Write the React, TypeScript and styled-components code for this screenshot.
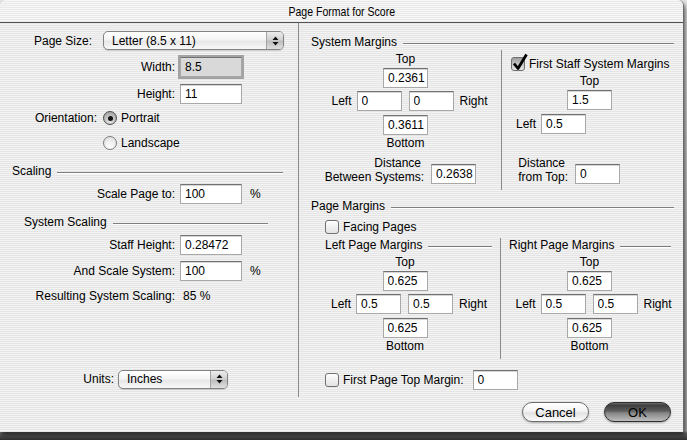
import styled, { createGlobalStyle } from "styled-components";

const GlobalStyle = createGlobalStyle`
  html, body {
    margin: 0;
    padding: 0;
  }
  body {
    width: 687px;
    height: 440px;
    overflow: hidden;
    background: linear-gradient(to bottom, #e6e6e6 0px, #b0b0b0 431px, #6a6a6a 433px, #2e2e2e 440px);
    font-family: "Liberation Sans", Arial, sans-serif;
  }
`;

const pinstripe =
    "repeating-linear-gradient(to bottom, #f3f3f3 0px, #f3f3f3 1px, #e5e5e5 1px, #e5e5e5 2px)";

const Window = styled.div`
    width: 684px;
    height: 432px;
    display: flex;
    flex-direction: column;
    background: ${pinstripe};
    border-radius: 6px 6px 0 0;
    border-right: 1px solid #6a6a6a;
    box-sizing: border-box;
    box-shadow: 1px 3px 5px rgba(0, 0, 0, 0.7);
    overflow: hidden;
    color: #000;
    font-size: 12px;
`;

const TitleBar = styled.div`
    flex: none;
    height: 22px;
    display: flex;
    align-items: center;
    justify-content: center;
    border-bottom: 1px solid #555;
    background: repeating-linear-gradient(to bottom, #f7f7f7 0px, #f7f7f7 1px, #e9e9e9 1px, #e9e9e9 2px);
`;

const TitleText = styled.span`
    display: inline-block;
    font-size: 13px;
    white-space: nowrap;
    transform: scaleX(0.81);
`;

const Main = styled.div`
    flex: none;
    height: 374px;
    display: flex;
`;

const LeftPane = styled.div`
    flex: none;
    box-sizing: border-box;
    width: 299px;
    display: flex;
    flex-direction: column;
    padding: 7px 0 8px;
    border-right: 1px solid #8a8a8a;
`;

const RightPane = styled.div`
    flex: 1;
    display: flex;
    flex-direction: column;
    padding-top: 11px;
`;

const Footer = styled.div`
    flex: 1;
    display: flex;
    justify-content: flex-end;
    align-items: flex-start;
    gap: 15px;
    padding: 5px 12px 0 0;
`;

const Row = styled.div<{ $mt?: number; $h?: number; $pl?: number; $auto?: boolean }>`
    flex: none;
    display: flex;
    align-items: center;
    height: ${(p) => p.$h ?? 20}px;
    margin-top: ${(p) => (p.$auto ? "auto" : `${p.$mt ?? 0}px`)};
    padding-left: ${(p) => p.$pl ?? 0}px;
    white-space: nowrap;
`;

const Label = styled.span<{ $w?: number; $gap?: number }>`
    flex: none;
    width: ${(p) => (p.$w ? `${p.$w}px` : "auto")};
    margin-right: ${(p) => p.$gap ?? 5}px;
    text-align: right;
    white-space: nowrap;
`;

const Unit = styled.span`
    margin-left: 8px;
`;

const Field = styled.input.attrs({ readOnly: true, type: "text" })<{ $w?: number; $focus?: boolean }>`
    flex: none;
    box-sizing: border-box;
    width: ${(p) => p.$w ?? 45}px;
    height: 20px;
    margin: 0;
    padding: 0 0 0 4px;
    border: 1px solid #a8a8a8;
    border-top-color: #717171;
    border-radius: 0;
    outline: none;
    background: ${(p) => (p.$focus ? "#d9d9d9" : "#ffffff")};
    box-shadow: ${(p) => (p.$focus ? "0 0 0 2px #a3a3a3" : "inset 0 1px 0 #d6d6d6")};
    font-family: "Liberation Sans", Arial, sans-serif;
    font-size: 12px;
    color: #000;
`;

const Popup = styled.div<{ $w: number }>`
    flex: none;
    box-sizing: border-box;
    width: ${(p) => p.$w}px;
    height: 19px;
    display: flex;
    align-items: center;
    border: 1px solid #828282;
    border-radius: 5px;
    overflow: hidden;
    background: linear-gradient(to bottom, #ffffff 0%, #f5f5f5 45%, #e7e7e7 55%, #f8f8f8 100%);
    box-shadow: 0 1px 1px rgba(0, 0, 0, 0.15);
`;

const PopupText = styled.span`
    flex: 1;
    padding-left: 8px;
    white-space: nowrap;
`;

const PopupArrows = styled.span`
    flex: none;
    align-self: stretch;
    width: 16px;
    display: flex;
    align-items: center;
    justify-content: center;
    border-left: 1px solid #a3a3a3;
    background: linear-gradient(to bottom, #ececec 0%, #d2d2d2 45%, #bebebe 55%, #e0e0e0 100%);
`;

const Radio = styled.span<{ $on?: boolean }>`
    flex: none;
    box-sizing: border-box;
    width: 14px;
    height: 14px;
    margin-right: 4px;
    border-radius: 50%;
    border: 1px solid ${(p) => (p.$on ? "#4d4d4d" : "#7c7c7c")};
    background: ${(p) =>
        p.$on
            ? "radial-gradient(circle at 50% 75%, #e8e8e8 0%, #a9a9a9 75%)"
            : "radial-gradient(circle at 50% 80%, #ffffff 0%, #e2e2e2 80%)"};
    display: flex;
    align-items: center;
    justify-content: center;
    &::after {
        content: "";
        display: ${(p) => (p.$on ? "block" : "none")};
        width: 5px;
        height: 5px;
        border-radius: 50%;
        background: #111;
    }
`;

const Check = styled.span<{ $on?: boolean }>`
    position: relative;
    flex: none;
    box-sizing: border-box;
    width: 14px;
    height: 14px;
    margin-right: 4px;
    border: 1px solid #707070;
    border-radius: 3px;
    background: ${(p) =>
        p.$on
            ? "linear-gradient(to bottom, #9d9d9d 0%, #c9c9c9 55%, #e6e6e6 100%)"
            : "linear-gradient(to bottom, #ffffff 0%, #f0f0f0 50%, #e4e4e4 100%)"};
`;

const CheckMark = styled.svg`
    position: absolute;
    left: 0px;
    top: -5px;
`;

const GroupHeader = styled.div<{ $mt?: number; $pl: number; $pr: number; $h?: number }>`
    flex: none;
    display: flex;
    align-items: center;
    height: ${(p) => p.$h ?? 16}px;
    margin-top: ${(p) => p.$mt ?? 0}px;
    padding-left: ${(p) => p.$pl}px;
    padding-right: ${(p) => p.$pr}px;
    white-space: nowrap;
    &::after {
        content: "";
        flex: 1;
        height: 1px;
        margin: 3px 0 0 6px;
        background: #7e7e7e;
        box-shadow: 0 1px 0 #ffffff;
    }
`;

const Columns = styled.div<{ $mt?: number; $h: number }>`
    flex: none;
    display: flex;
    height: ${(p) => p.$h}px;
    margin-top: ${(p) => p.$mt ?? 0}px;
`;

const Column = styled.div<{ $w?: number; $divider?: boolean }>`
    flex: ${(p) => (p.$w ? "none" : "1")};
    width: ${(p) => (p.$w ? `${p.$w}px` : "auto")};
    display: flex;
    flex-direction: column;
    border-left: ${(p) => (p.$divider ? "1px solid #8a8a8a" : "none")};
`;

const MarginBlock = styled.div<{ $pl?: number; $pr?: number; $pt?: number }>`
    display: flex;
    flex-direction: column;
    align-items: center;
    padding: ${(p) => p.$pt ?? 0}px ${(p) => p.$pr ?? 0}px 0 ${(p) => p.$pl ?? 0}px;
`;

const Caption = styled.div<{ $mt?: number }>`
    line-height: 14px;
    margin-top: ${(p) => p.$mt ?? 0}px;
    text-align: center;
`;

const SideRow = styled.div<{ $mt: number }>`
    display: flex;
    align-items: center;
    height: 20px;
    margin-top: ${(p) => p.$mt}px;
`;

const SideLabel = styled.span<{ $side: "left" | "right" }>`
    width: 30px;
    text-align: ${(p) => (p.$side === "left" ? "right" : "left")};
    margin-left: ${(p) => (p.$side === "right" ? 6 : 0)}px;
    margin-right: ${(p) => (p.$side === "left" ? 5 : 0)}px;
`;

const Pair = styled.div`
    display: flex;
    gap: 7px;
`;

const StackRow = styled.div<{ $mt: number; $pl?: number; $pr?: number; $end?: boolean }>`
    align-self: stretch;
    display: flex;
    align-items: flex-end;
    justify-content: ${(p) => (p.$end ? "flex-end" : "flex-start")};
    margin-top: ${(p) => p.$mt}px;
    padding-left: ${(p) => p.$pl ?? 0}px;
    padding-right: ${(p) => p.$pr ?? 0}px;
`;

const StackLabel = styled.div<{ $w?: number }>`
    width: ${(p) => (p.$w ? `${p.$w}px` : "auto")};
    margin-right: 7px;
    line-height: 14px;
    text-align: right;
    white-space: nowrap;
    & > span {
        display: block;
    }
    & > span:first-child {
        padding-right: 3px;
    }
`;

const TopGroup = styled.div<{ $ml: number }>`
    width: 45px;
    margin-left: ${(p) => p.$ml}px;
    display: flex;
    flex-direction: column;
    align-items: center;
    & > input {
        margin-top: 2px;
    }
`;

const TopField = styled(Field)`
    margin-top: 2px;
`;

const PushButton = styled.div<{ $default?: boolean }>`
    box-sizing: border-box;
    width: 67px;
    height: 20px;
    display: flex;
    align-items: center;
    justify-content: center;
    border-radius: 10px;
    border: 1px solid ${(p) => (p.$default ? "#2e2e2e" : "#6c6c6c")};
    background: ${(p) =>
        p.$default
            ? "linear-gradient(to bottom, #6e6e6e 0%, #3e3e3e 12%, #5e5e5e 45%, #858585 55%, #bdbdbd 100%)"
            : "linear-gradient(to bottom, #ffffff 0%, #f4f4f4 45%, #e3e3e3 55%, #fbfbfb 100%)"};
    box-shadow: 0 1px 2px rgba(0, 0, 0, 0.3);
    font-size: 13px;
`;

const Arrows = () => (
    <svg width="7" height="10" viewBox="0 0 7 10">
        <path d="M3.5 0.5 L6.5 4 L0.5 4 Z M0.5 6 L6.5 6 L3.5 9.5 Z" fill="#111" />
    </svg>
);

const Checkbox = ({ on }: { on?: boolean }) => (
    <Check $on={on}>
        {on && (
            <CheckMark width="16" height="18" viewBox="0 0 16 18">
                <path d="M2 10.5 L6 15.5 L14.5 1.5" fill="none" stroke="#000" strokeWidth="2.8" strokeLinejoin="round" />
            </CheckMark>
        )}
    </Check>
);

const MarginBox = (props: { top: string; left: string; right: string; bottom: string; mt: number }) => (
    <>
        <Caption $mt={props.mt}>Top</Caption>
        <TopField defaultValue={props.top} />
        <SideRow $mt={3}>
            <SideLabel $side='left'>Left</SideLabel>
            <Pair>
                <Field defaultValue={props.left} />
                <Field defaultValue={props.right} />
            </Pair>
            <SideLabel $side='right'>Right</SideLabel>
        </SideRow>
        <SideRow $mt={4}>
            <Field defaultValue={props.bottom} />
        </SideRow>
        <Caption $mt={1}>Bottom</Caption>
    </>
);

const App = () => {
    return (
        <>
            <GlobalStyle />
            <Window>
                <TitleBar>
                    <TitleText>Page Format for Score</TitleText>
                </TitleBar>
                <Main>
                    <LeftPane>
                        <Row $h={21}>
                            <Label $w={92} $gap={11}>
                                Page Size:
                            </Label>
                            <Popup $w={181}>
                                <PopupText>Letter (8.5 x 11)</PopupText>
                                <PopupArrows>
                                    <Arrows />
                                </PopupArrows>
                            </Popup>
                        </Row>
                        <Row $mt={5} $h={21}>
                            <Label $w={175} $gap={5}>
                                Width:
                            </Label>
                            <Field $w={62} $focus defaultValue='8.5' />
                        </Row>
                        <Row $mt={6} $h={21}>
                            <Label $w={175} $gap={5}>
                                Height:
                            </Label>
                            <Field $w={62} defaultValue='11' />
                        </Row>
                        <Row $mt={4}>
                            <Label $w={97} $gap={6}>
                                Orientation:
                            </Label>
                            <Radio $on />
                            Portrait
                        </Row>
                        <Row $mt={5} $pl={103}>
                            <Radio />
                            Landscape
                        </Row>
                        <GroupHeader $mt={10} $pl={12} $pr={15}>
                            Scaling
                        </GroupHeader>
                        <Row $mt={4} $h={21}>
                            <Label $w={175} $gap={5}>
                                Scale Page to:
                            </Label>
                            <Field $w={62} defaultValue='100' />
                            <Unit>%</Unit>
                        </Row>
                        <GroupHeader $mt={10} $pl={24} $pr={30}>
                            System Scaling
                        </GroupHeader>
                        <Row $mt={5}>
                            <Label $w={175} $gap={5}>
                                Staff Height:
                            </Label>
                            <Field $w={62} defaultValue='0.28472' />
                        </Row>
                        <Row $mt={6}>
                            <Label $w={175} $gap={5}>
                                And Scale System:
                            </Label>
                            <Field $w={62} defaultValue='100' />
                            <Unit>%</Unit>
                        </Row>
                        <Row $mt={7} $h={16}>
                            <Label $w={175} $gap={8}>
                                Resulting System Scaling:
                            </Label>
                            85 %
                        </Row>
                        <Row $auto>
                            <Label $w={114} $gap={4}>
                                Units:
                            </Label>
                            <Popup $w={110}>
                                <PopupText>Inches</PopupText>
                                <PopupArrows>
                                    <Arrows />
                                </PopupArrows>
                            </Popup>
                        </Row>
                    </LeftPane>

                    <RightPane>
                        <GroupHeader $pl={12} $pr={9}>
                            System Margins
                        </GroupHeader>
                        <Columns $h={140}>
                            <Column $w={202}>
                                <MarginBlock $pl={11} $pt={2}>
                                    <MarginBox top='0.2361' left='0' right='0' bottom='0.3611' mt={0} />
                                    <StackRow $mt={6} $end $pr={25}>
                                        <StackLabel>
                                            <span>Distance</span>
                                            <span>Between Systems:</span>
                                        </StackLabel>
                                        <Field defaultValue='0.2638' />
                                    </StackRow>
                                </MarginBlock>
                            </Column>
                            <Column $divider>
                                <Row $mt={6} $h={15} $pl={9}>
                                    <Checkbox on />
                                    First Staff System Margins
                                </Row>
                                <TopGroup $ml={65}>
                                    <Caption $mt={3}>Top</Caption>
                                    <Field defaultValue='1.5' />
                                </TopGroup>
                                <Row $mt={4} $pl={14}>
                                    <Label $gap={5}>Left</Label>
                                    <Field defaultValue='0.5' />
                                </Row>
                                <StackRow $mt={22} $pl={14}>
                                    <StackLabel $w={52}>
                                        <span>Distance</span>
                                        <span>from Top:</span>
                                    </StackLabel>
                                    <Field defaultValue='0' />
                                </StackRow>
                            </Column>
                        </Columns>

                        <GroupHeader $mt={8} $pl={12} $pr={9}>
                            Page Margins
                        </GroupHeader>
                        <Row $mt={5} $h={15} $pl={26}>
                            <Checkbox />
                            Facing Pages
                        </Row>
                        <Columns $mt={4} $h={121}>
                            <Column $w={201}>
                                <GroupHeader $h={14} $pl={26} $pr={8}>
                                    Left Page Margins
                                </GroupHeader>
                                <MarginBlock $pl={11}>
                                    <MarginBox top='0.625' left='0.5' right='0.5' bottom='0.625' mt={3} />
                                </MarginBlock>
                            </Column>
                            <Column $divider>
                                <GroupHeader $h={14} $pl={8} $pr={12}>
                                    Right Page Margins
                                </GroupHeader>
                                <MarginBlock $pr={5}>
                                    <MarginBox top='0.625' left='0.5' right='0.5' bottom='0.625' mt={3} />
                                </MarginBlock>
                            </Column>
                        </Columns>
                        <Row $mt={11} $pl={26}>
                            <Checkbox />
                            <Label $gap={9}>First Page Top Margin:</Label>
                            <Field defaultValue='0' />
                        </Row>
                    </RightPane>
                </Main>
                <Footer>
                    <PushButton>Cancel</PushButton>
                    <PushButton $default>OK</PushButton>
                </Footer>
            </Window>
        </>
    );
};

export default App;
